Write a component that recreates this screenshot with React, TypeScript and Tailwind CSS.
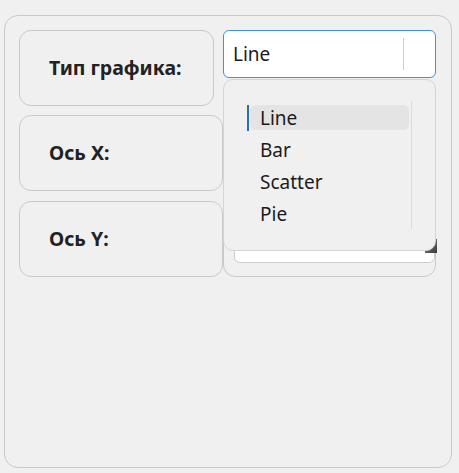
import React from 'react';

const FONT = "font-['Segoe_UI','Noto_Sans','Open_Sans',sans-serif]";

const items = ['Line', 'Bar', 'Scatter', 'Pie'];

const LabelBox = ({ text, w }: { text: string; w: string }) => (
  <div
    className={`${w} h-full shrink-0 border border-[#c9c9c9] rounded-[12px] flex items-center pl-[29px] text-[19.5px] font-bold text-[#222222]`}
  >
    {text}
  </div>
);

const App: React.FC = () => {
  return (
    <div className={`w-[459px] h-[473px] bg-[#f0f0f0] pt-[15px] pl-[4px] ${FONT}`}>
      <div className="w-[448px] h-[453px] border border-[#c9c9c9] rounded-[14px] pt-[14px] pl-[14px]">
        <div className="w-[417px] flex flex-col">
          {/* Тип графика */}
          <div className="h-[76px] flex gap-[9px] relative z-10">
            <LabelBox text="Тип графика:" w="w-[195px]" />
            <div className="relative w-[213px] h-[48px]">
              <div className="h-full bg-white border border-[#3b8ff0] rounded-[6px] flex items-center pl-[9px] text-[19px] text-[#1b1b1b]">
                <span>Line</span>
                <div className="absolute left-[180px] top-[8px] w-px h-[32px] bg-[#cccccc]" />
              </div>

              {/* открытый список */}
              <div className="absolute left-0 top-[49px] w-[213px] h-[172px]">
                <div className="absolute right-[-1px] bottom-[-2px] w-[12px] h-[14px] bg-gradient-to-tl from-[#3a3a3a] to-[#8a8a8a]" />
                <div className="absolute inset-0 bg-[#f0f0f0] border border-[#d4d4d4] rounded-[10px] pt-[22px]">
                  <div className="absolute left-[187px] top-[21px] w-px h-[128px] bg-[#dcdcdc]" />
                  {items.map((it, i) => (
                    <div key={it} className="relative h-[32px] flex items-center text-[19px] text-[#1b1b1b]">
                      {i === 0 && (
                        <>
                          <div className="absolute left-[23px] top-[3px] w-[2px] h-[26px] bg-[#1f6fc7]" />
                          <div className="absolute left-[26px] right-[26px] top-[3px] h-[25px] bg-[#e4e4e4] rounded-[6px]" />
                        </>
                      )}
                      <span className="relative pl-[36px]">{it}</span>
                    </div>
                  ))}
                </div>
              </div>
            </div>
          </div>

          {/* Ось X */}
          <div className="h-[76px] mt-[9px] flex">
            <LabelBox text="Ось X:" w="w-[204px]" />
            <div className="flex-1 h-full border border-[#c9c9c9] rounded-[12px] flex items-center pl-[10px]">
              <div className="w-full h-[48px] bg-white border border-[#cccccc] rounded-[6px]" />
            </div>
          </div>

          {/* Ось Y */}
          <div className="h-[76px] mt-[10px] flex">
            <LabelBox text="Ось Y:" w="w-[204px]" />
            <div className="flex-1 h-full border border-[#c9c9c9] rounded-[12px] flex items-center pl-[10px]">
              <div className="w-full h-[48px] bg-white border border-[#cccccc] rounded-[6px]" />
            </div>
          </div>
        </div>
      </div>
    </div>
  );
};

export default App;
